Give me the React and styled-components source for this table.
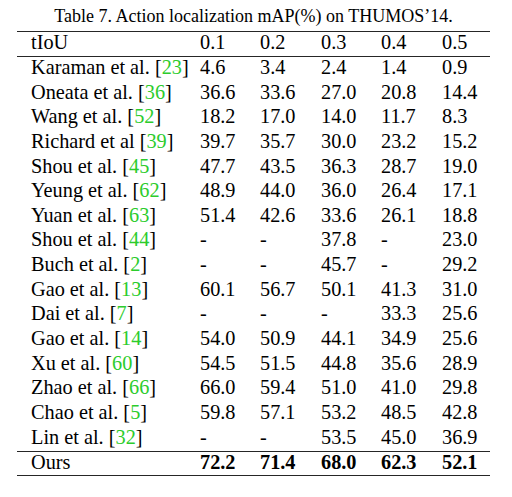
import React from "react";
import styled, { createGlobalStyle } from "styled-components";

const GlobalStyle = createGlobalStyle`
  body {
    margin: 0;
    background: #ffffff;
    font-family: "Liberation Serif", "Times New Roman", serif;
    color: #000000;
  }
`;

const Wrapper = styled.div`
  width: 473px;
  margin-left: 17px;
  padding-top: 6px;
`;

const Caption = styled.div`
  font-size: 18px;
  line-height: 20px;
  text-align: center;
  margin-bottom: 5px;
`;

const Table = styled.div`
  display: flex;
  flex-direction: column;
  font-size: 20.3px;
  line-height: 20px;
`;

const Row = styled.div`
  display: grid;
  grid-template-columns: 183px 60px 61px 60px 61px 48px;
  padding-bottom: ${(p) => p.pad}px;
  border-top: ${(p) => (p.ruleTop ? "1px solid #262626" : "none")};
  border-bottom: ${(p) => (p.ruleBottom ? "1px solid #262626" : "none")};
  font-weight: ${(p) => (p.bold ? "bold" : "normal")};
`;

const NameCell = styled.div`
  padding-left: 14px;
  white-space: nowrap;
  font-weight: normal;
`;

const Cell = styled.div`
  white-space: nowrap;
`;

const Cite = styled.span`
  color: #2ccc2c;
`;

const rows = [
  ["Karaman et al.", "23", ["4.6", "3.4", "2.4", "1.4", "0.9"]],
  ["Oneata et al.", "36", ["36.6", "33.6", "27.0", "20.8", "14.4"]],
  ["Wang et al.", "52", ["18.2", "17.0", "14.0", "11.7", "8.3"]],
  ["Richard et al", "39", ["39.7", "35.7", "30.0", "23.2", "15.2"]],
  ["Shou et al.", "45", ["47.7", "43.5", "36.3", "28.7", "19.0"]],
  ["Yeung et al.", "62", ["48.9", "44.0", "36.0", "26.4", "17.1"]],
  ["Yuan et al.", "63", ["51.4", "42.6", "33.6", "26.1", "18.8"]],
  ["Shou et al.", "44", ["-", "-", "37.8", "-", "23.0"]],
  ["Buch et al.", "2", ["-", "-", "45.7", "-", "29.2"]],
  ["Gao et al.", "13", ["60.1", "56.7", "50.1", "41.3", "31.0"]],
  ["Dai et al.", "7", ["-", "-", "-", "33.3", "25.6"]],
  ["Gao et al.", "14", ["54.0", "50.9", "44.1", "34.9", "25.6"]],
  ["Xu et al.", "60", ["54.5", "51.5", "44.8", "35.6", "28.9"]],
  ["Zhao et al.", "66", ["66.0", "59.4", "51.0", "41.0", "29.8"]],
  ["Chao et al.", "5", ["59.8", "57.1", "53.2", "48.5", "42.8"]],
  ["Lin et al.", "32", ["-", "-", "53.5", "45.0", "36.9"]],
];

const thresholds = ["0.1", "0.2", "0.3", "0.4", "0.5"];
const ours = ["72.2", "71.4", "68.0", "62.3", "52.1"];

export default function App() {
  return (
    <>
      <GlobalStyle />
      <Wrapper>
        <Caption>Table 7. Action localization mAP(%) on THUMOS’14.</Caption>
        <Table>
          <Row ruleTop pad={4}>
            <NameCell>tIoU</NameCell>
            {thresholds.map((t) => (
              <Cell key={t}>{t}</Cell>
            ))}
          </Row>
          {rows.map(([name, ref, vals], i) => (
            <Row key={i} ruleTop={i === 0} pad={4.65}>
              <NameCell>
                {name} [<Cite>{ref}</Cite>]
              </NameCell>
              {vals.map((v, j) => (
                <Cell key={j}>{v}</Cell>
              ))}
            </Row>
          ))}
          <Row ruleTop ruleBottom bold pad={3}>
            <NameCell>Ours</NameCell>
            {ours.map((v, j) => (
              <Cell key={j}>{v}</Cell>
            ))}
          </Row>
        </Table>
      </Wrapper>
    </>
  );
}
